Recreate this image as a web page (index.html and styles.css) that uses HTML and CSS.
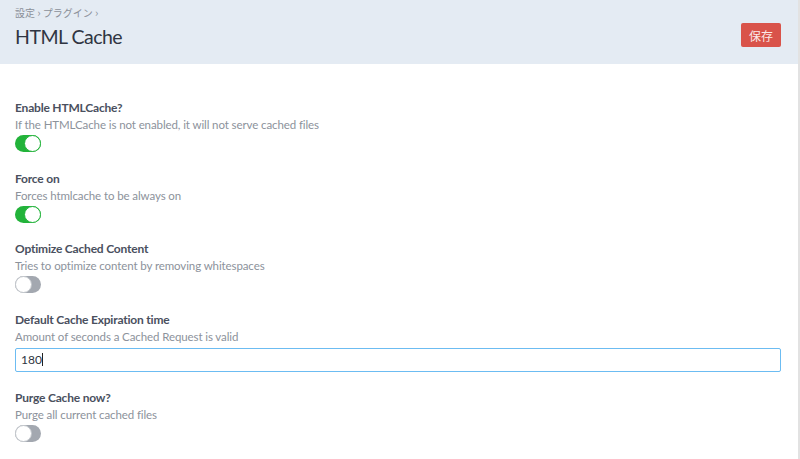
FILE: index.html
```html
<!DOCTYPE html>
<html lang="ja">
<head>
  <meta charset="UTF-8">
  <meta name="viewport" content="width=device-width, initial-scale=1.0">
  <title>HTML Cache</title>
  <link rel="stylesheet" href="styles.css">
</head>
<body>
  <header class="page-header">
    <div class="titles">
      <div class="breadcrumb">設定 <span class="sep">›</span> プラグイン <span class="sep">›</span></div>
      <h1>HTML Cache</h1>
    </div>
    <button class="btn-save">保存</button>
  </header>
  <main class="settings">
    <div class="field">
      <label>Enable HTMLCache?</label>
      <p class="help">If the HTMLCache is not enabled, it will not serve cached files</p>
      <span class="switch on"></span>
    </div>
    <div class="field">
      <label>Force on</label>
      <p class="help">Forces htmlcache to be always on</p>
      <span class="switch on"></span>
    </div>
    <div class="field">
      <label>Optimize Cached Content</label>
      <p class="help">Tries to optimize content by removing whitespaces</p>
      <span class="switch"></span>
    </div>
    <div class="field">
      <label>Default Cache Expiration time</label>
      <p class="help">Amount of seconds a Cached Request is valid</p>
      <div class="text-input">180<span class="caret"></span></div>
    </div>
    <div class="field">
      <label>Purge Cache now?</label>
      <p class="help">Purge all current cached files</p>
      <span class="switch"></span>
    </div>
  </main>
</body>
</html>
```

FILE: styles.css
```css
html, body {
  height: 100%;
}

body {
  margin: 0;
  font-family: Lato, "Noto Sans CJK JP", sans-serif;
  background: #fff;
  color: #3d4452;
  border-right: 2px solid #e2e2e2;
  box-sizing: border-box;
}

.page-header {
  background: #e4ebf3;
  height: 64px;
  box-sizing: border-box;
  padding: 5px 17px 0 15px;
  display: flex;
  justify-content: space-between;
  align-items: flex-start;
}

.breadcrumb {
  font-family: "Noto Sans CJK JP", sans-serif;
  font-size: 10px;
  color: #8b9099;
  line-height: 14px;
}

.breadcrumb .sep {
  font-size: 11px;
}

.page-header h1 {
  margin: 5px 0 0;
  font-size: 19.5px;
  font-weight: 400;
  letter-spacing: -0.5px;
  color: #2f3542;
  line-height: 24px;
}

.btn-save {
  margin-top: 18px;
  width: 40px;
  height: 24px;
  border: 0;
  border-radius: 2px;
  background: #d9534a;
  color: #fbe9e7;
  font-family: "Noto Sans CJK JP", sans-serif;
  font-size: 12px;
  padding: 0;
}

.settings {
  padding: 36px 17px 0 15px;
}

.field {
  margin-bottom: 18.6px;
}

.field label {
  display: block;
  font-size: 12px;
  font-weight: 700;
  letter-spacing: -0.2px;
  line-height: 16px;
  color: #4a505e;
}

.help {
  margin: 0;
  font-size: 11.5px;
  letter-spacing: -0.1px;
  line-height: 17px;
  color: #8c929b;
}

.switch {
  display: block;
  position: relative;
  margin-top: 2px;
  width: 26px;
  height: 17px;
  border-radius: 9px;
  background: #a3a8b0;
}

.switch::after {
  content: "";
  position: absolute;
  top: 0;
  left: 0;
  width: 15px;
  height: 15px;
  border-radius: 50%;
  background: #fff;
  border: 1px solid #c3c7cc;
}

.switch.on {
  background: #22b33a;
}

.switch.on::after {
  left: 9px;
  border-color: #22b33a;
}

.text-input {
  margin-top: 3px;
  height: 24px;
  box-sizing: border-box;
  border: 1px solid #6cbcf2;
  border-radius: 2px;
  padding: 0 5px;
  font-size: 12px;
  line-height: 22px;
  color: #2f3542;
}

.caret {
  display: inline-block;
  width: 1px;
  height: 13px;
  background: #222;
  vertical-align: -2px;
}
```
